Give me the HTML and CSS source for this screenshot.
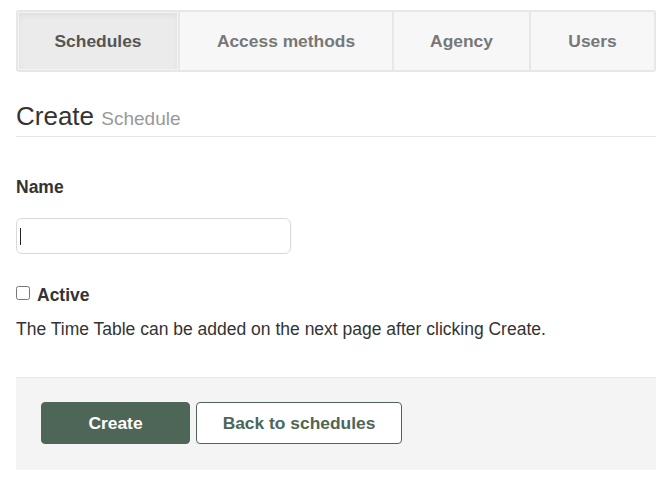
FILE: index.html
```html
<!DOCTYPE html>
<html>
<head>
<meta charset="utf-8">
<link rel="stylesheet" href="styles.css">
</head>
<body>
<div class="page">
  <nav class="tabs">
    <a class="tab tab-schedules active">Schedules</a>
    <a class="tab tab-access">Access methods</a>
    <a class="tab tab-agency">Agency</a>
    <a class="tab tab-users">Users</a>
  </nav>
  <h1 class="page-title">Create <small>Schedule</small></h1>
  <form class="form">
    <label class="field-label" for="name">Name</label>
    <div class="input-wrap"><input id="name" class="text-input" type="text" autofocus><span class="caret"></span></div>
    <label class="check"><input type="checkbox" class="checkbox"><span>Active</span></label>
    <p class="hint">The Time Table can be added on the next page after clicking Create.</p>
    <div class="actions">
      <button type="button" class="btn btn-primary">Create</button>
      <button type="button" class="btn btn-outline">Back to schedules</button>
    </div>
  </form>
</div>
</body>
</html>
```
FILE: styles.css
```css
html, body {
  margin: 0;
  padding: 0;
  background: #fff;
  overflow: hidden;
}
body {
  font-family: "Liberation Sans", Arial, sans-serif;
  color: #333;
  font-size: 16px;
}
.page {
  padding: 10px 0 0 16px;
}
.tabs {
  display: flex;
  width: 636px;
  height: 58px;
  border: 2px solid #e7e7e7;
  border-radius: 3px;
  background: #f7f7f7;
}
.tab {
  display: flex;
  align-items: center;
  justify-content: center;
  font-weight: bold;
  font-size: 17.4px;
  color: #777;
  border-right: 2px solid #e7e7e7;
  box-sizing: border-box;
}
.tab-schedules { width: 162px; }
.tab-access { width: 214px; }
.tab-agency { width: 137px; }
.tab-users { width: 123px; border-right: none; }
.tab.active {
  background: #ebebeb;
  color: #555;
  box-shadow: inset 0 0 0 1px #f4f4f4, inset 0 3px 6px rgba(0,0,0,0.06);
}
.page-title {
  margin: 29px 0 0 0;
  font-size: 26px;
  font-weight: normal;
  line-height: 30px;
  color: #333;
  padding-bottom: 5px;
  border-bottom: 1px solid #e5e5e5;
}
.page-title small {
  font-size: 19px;
  line-height: 1;
  color: #999;
}
.form {
  margin: 0;
}
.field-label {
  display: block;
  margin-top: 40px;
  font-weight: bold;
  font-size: 17.5px;
  line-height: 20px;
  color: #333;
}
.input-wrap {
  position: relative;
  margin-top: 21px;
  width: 275px;
  height: 36px;
}
.text-input {
  box-sizing: border-box;
  width: 275px;
  height: 36px;
  border: 1px solid #d9d9d9;
  border-radius: 6px;
  outline: none;
  padding: 0 6px;
  font: 16px "Liberation Sans", Arial, sans-serif;
  caret-color: transparent;
}
.caret {
  position: absolute;
  left: 4px;
  top: 10px;
  width: 1px;
  height: 17px;
  background: #222;
}
.check {
  display: flex;
  align-items: center;
  margin-top: 31px;
  font-weight: bold;
  font-size: 17.5px;
  line-height: 20px;
  color: #333;
}
.checkbox {
  margin: 0 7px 0 0;
  width: 14px;
  height: 14px;
  position: relative;
  top: -2px;
}
.hint {
  margin: 13px 0 0 0;
  font-size: 17.5px;
  line-height: 22px;
  color: #333;
}
.actions {
  margin-top: 37px;
  border-top: 1px solid #e5e5e5;
  background: #f4f4f4;
  padding: 24px 25px 26px 25px;
  display: flex;
  gap: 6px;
}
.btn {
  box-sizing: border-box;
  height: 42px;
  border-radius: 4px;
  font: bold 17.4px "Liberation Sans", Arial, sans-serif;
  cursor: pointer;
}
.btn-primary {
  width: 149px;
  background: #4e6658;
  border: 1px solid #4e6658;
  color: #fff;
}
.btn-outline {
  width: 206px;
  background: #fff;
  border: 1px solid #4e6658;
  color: #4e6658;
}
```
